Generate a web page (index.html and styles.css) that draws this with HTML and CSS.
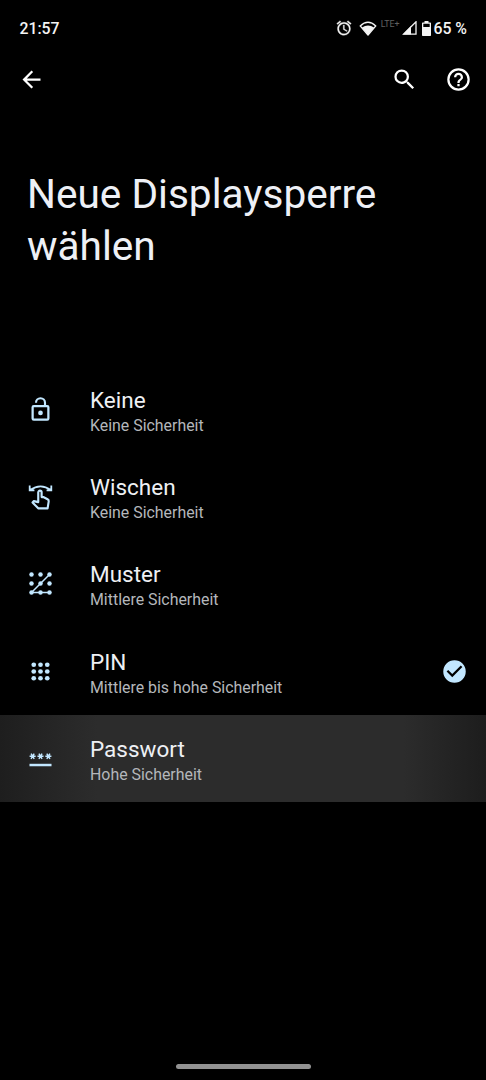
FILE: index.html
```html
<!DOCTYPE html>
<html lang="de">
<head>
<meta charset="utf-8">
<title>Neue Displaysperre wählen</title>
<link rel="stylesheet" href="styles.css">
</head>
<body>
<div class="screen">
  <header class="status">
    <span class="clock">21:57</span>
    <div class="indicators">
      <svg class="alarm" width="16" height="16" viewBox="1 1 22 22" fill="currentColor" stroke="currentColor" stroke-width=".4"><path d="M22 5.720l-4.600-3.860-1.290 1.530 4.600 3.860L22 5.720zM7.880 3.390L6.600 1.860 2 5.710l1.290 1.530 4.590-3.850zM12.500 8H11v6l4.750 2.850.75-1.230-4-2.370V8zM12 4c-4.970 0-9 4.030-9 9s4.020 9 9 9a9 9 0 0 0 0-18zm0 16c-3.870 0-7-3.130-7-7s3.130-7 7-7 7 3.130 7 7-3.130 7-7 7z"/></svg>
      <svg class="wifi" width="18" height="15" viewBox="0 0 18 15"><path d="M1.200 4.900Q9 -2.300 16.800 4.900L9 14Z" fill="none" stroke="currentColor" stroke-width="1.400" stroke-linejoin="round"/><path d="M3 6.400Q9 2.600 15 6.400L9 14Z" fill="currentColor"/></svg>
      <span class="network">LTE+</span>
      <svg class="signal" width="15" height="14" viewBox="0 0 15 14"><path d="M14 .8V13.200H1.600Z" fill="none" stroke="currentColor" stroke-width="1.300"/><path d="M9 5V13.500H1Z" fill="currentColor"/></svg>
      <svg class="battery" width="9" height="15" viewBox="0 0 9 15"><path d="M2.500 0h4v1.500H8.300Q9 1.500 9 2.200V14.300Q9 15 8.300 15H.7Q0 15 0 14.300V2.200Q0 1.500 .7 1.500H2.500ZM1.300 2.800V6H7.700V2.800Z" fill="currentColor" fill-rule="evenodd"/></svg>
      <span class="percent">65 %</span>
    </div>
  </header>
  <nav class="toolbar">
    <svg class="icon" viewBox="0 0 24 24"><path d="M20 11H7.830l5.590-5.590L12 4l-8 8 8 8 1.410-1.410L7.830 13H20z"/></svg>
    <div class="actions">
      <svg class="icon" viewBox="0 0 24 24"><path d="M15.500 14h-.79l-.28-.27A6.470 6.470 0 0 0 16 9.500 6.500 6.500 0 1 0 9.500 16c1.610 0 3.090-.59 4.230-1.570l.27.28v.79l5 4.990L20.490 19zM9.500 14a4.500 4.500 0 1 1 0-9 4.500 4.500 0 0 1 0 9z"/></svg>
      <svg class="icon" viewBox="0 0 24 24"><path d="M11 18h2v-2h-2v2zM12 2a10 10 0 1 0 0 20 10 10 0 0 0 0-20zm0 18a8 8 0 1 1 0-16 8 8 0 0 1 0 16zM12 6a4 4 0 0 0-4 4h2a2 2 0 1 1 4 0c0 2-3 1.750-3 5h2c0-2.250 3-2.500 3-5a4 4 0 0 0-4-4z"/></svg>
    </div>
  </nav>
  <h1 class="heading">Neue Displaysperre wählen</h1>
  <main class="options">
    <section class="option">
      <svg class="icon" viewBox="0 0 24 24"><path d="M8 6A4 4 0 0 1 16 6V9" fill="none" stroke="currentColor" stroke-width="1.900"/><path d="M4 10a2 2 0 0 1 2-2h12a2 2 0 0 1 2 2v10a2 2 0 0 1-2 2H6a2 2 0 0 1-2-2zM6 10v10h12V10z" fill-rule="evenodd"/><circle cx="12" cy="15" r="2.100"/></svg>
      <div class="copy"><h2>Keine</h2><p>Keine Sicherheit</p></div>
    </section>
    <section class="option">
      <svg class="icon" viewBox="0 0 24 24"><g fill="none" stroke="currentColor" stroke-width="1.600"><path d="M2.800 6.300Q12-.4 21.200 6.300M2.400 2.200V6.600H6.600M21.600 2.200V6.600H17.400"/><path stroke-width="1.900" stroke-linejoin="round" d="M10 17V8.300a1.500 1.500 0 0 1 3 0V12.500H14.500L18.300 14.400Q19.500 15 19.300 16.300L18.300 22.600H10.200L4.900 17.300L6.100 16.100Z"/></g></svg>
      <div class="copy"><h2>Wischen</h2><p>Keine Sicherheit</p></div>
    </section>
    <section class="option">
      <svg class="icon" viewBox="0 0 24 24"><path d="M20 4L4 20H20" fill="none" stroke="currentColor" stroke-width="1.300"/><circle cx="4" cy="4" r="2"/><circle cx="12" cy="4" r="2"/><circle cx="20" cy="4" r="2"/><circle cx="4" cy="12" r="2"/><circle cx="12" cy="12" r="2"/><circle cx="20" cy="12" r="2"/><circle cx="4" cy="20" r="2"/><circle cx="12" cy="20" r="2"/><circle cx="20" cy="20" r="2"/></svg>
      <div class="copy"><h2>Muster</h2><p>Mittlere Sicherheit</p></div>
    </section>
    <section class="option">
      <svg class="icon" viewBox="0 0 24 24"><circle cx="6" cy="6" r="2.100"/><circle cx="12" cy="6" r="2.100"/><circle cx="18" cy="6" r="2.100"/><circle cx="6" cy="12" r="2.100"/><circle cx="12" cy="12" r="2.100"/><circle cx="18" cy="12" r="2.100"/><circle cx="6" cy="18" r="2.100"/><circle cx="12" cy="18" r="2.100"/><circle cx="18" cy="18" r="2.100"/></svg>
      <div class="copy"><h2>PIN</h2><p>Mittlere bis hohe Sicherheit</p></div>
      <svg class="icon check" viewBox="0 0 24 24"><path d="M12 2a10 10 0 1 0 0 20 10 10 0 0 0 0-20zm-2 15l-5-5 1.410-1.410L10 14.170l7.590-7.590L19 8z"/></svg>
    </section>
    <section class="option pressed">
      <svg class="icon" viewBox="0 0 24 24"><path d="M2.200 16.700H21.800V18.900H2.200Z"/><g stroke="currentColor" stroke-width="1.300"><path d="M2.300 10H7.700M3.600 7.700L6.400 12.300M6.400 7.700L3.600 12.300"/><path d="M9.300 10H14.700M10.600 7.700L13.400 12.300M13.400 7.700L10.600 12.300"/><path d="M16.300 10H21.700M17.600 7.700L20.400 12.300M20.400 7.700L17.600 12.300"/></g></svg>
      <div class="copy"><h2>Passwort</h2><p>Hohe Sicherheit</p></div>
    </section>
  </main>
  <footer class="gesture"><div class="handle"></div></footer>
</div>
</body>
</html>
```
FILE: styles.css
```css
* { box-sizing: border-box; margin: 0; padding: 0; }
body { background: #000; color: #fff; font-family: Roboto, sans-serif; }
svg { display: block; flex: none; }
.screen { display: flex; flex-direction: column; width: 486px; height: 1080px; background: #000; overflow: hidden; }
.status { display: flex; justify-content: space-between; height: 57px; padding: 0 19px 0 19.500px; font-size: 15.800px; font-weight: 500; color: #f4f4f4; }
.clock { line-height: 58px; }
.indicators { display: flex; align-items: center; height: 57px; }
.alarm { margin-top: -1px; }
.wifi { margin: -1px 0 0 7px; }
.network { margin: -9px 3px 0 4px; font-size: 8.800px; line-height: 10px; font-weight: 400; color: #606060; }
.signal { margin-top: -1px; }
.battery { margin: -1px 2px 0 5px; }
.percent { line-height: 58px; }
.icon { width: 27px; height: 27px; fill: currentColor; }
.toolbar { display: flex; align-items: center; justify-content: space-between; height: 44px; padding: 0 14px 0 18px; }
.actions { display: flex; gap: 27px; }
.heading { height: 264.700px; padding: 67px 27px 0; font-size: 40.600px; line-height: 52px; font-weight: 400; color: #eef0f6; }
.options { flex: 1; }
.option { display: flex; align-items: center; height: 87.300px; padding: 0 18px 0 27px; color: #c2e7ff; }
.copy { flex: 1; margin-left: 36px; padding-top: 3px; }
.copy h2 { font-size: 22.500px; line-height: 26px; font-weight: 400; color: #eef0f4; }
.copy p { margin-top: 3px; font-size: 15.900px; line-height: 19px; color: #b4b7bb; }
.pressed { background: linear-gradient(90deg, #1e1e1e, #2c2c2c 20%, #2c2c2c 83%, #1d1d1d); }
.gesture { display: flex; justify-content: center; height: 16px; }
.handle { width: 135px; height: 5px; border-radius: 3px; background: #929292; }
```
